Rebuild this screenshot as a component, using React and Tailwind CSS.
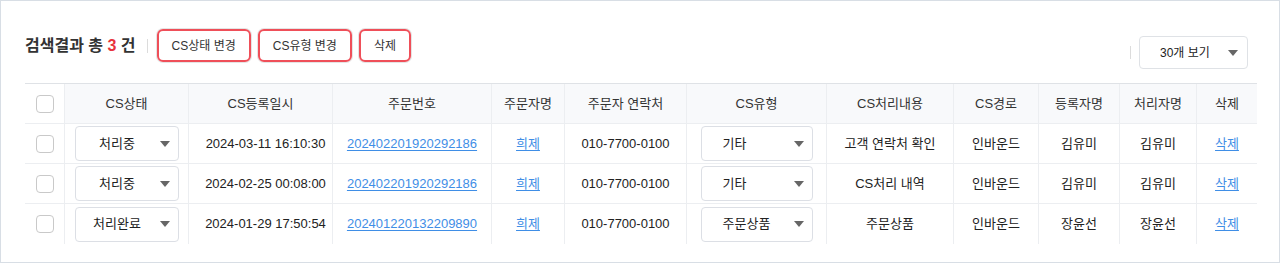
const FONT = { fontFamily: '"Liberation Sans", "Noto Sans CJK KR", sans-serif' };

const cols = 'grid grid-cols-[40px_124px_144px_159px_73px_122px_140px_127px_85px_81px_77px_60px]';

const rows = [
	{ status: '처리중', date: '2024-03-11 16:10:30', order: '202402201920292186', type: '기타', content: '고객 연락처 확인', staff: '김유미' },
	{ status: '처리중', date: '2024-02-25 00:08:00', order: '202402201920292186', type: '기타', content: 'CS처리 내역', staff: '김유미' },
	{ status: '처리완료', date: '2024-01-29 17:50:54', order: '202401220132209890', type: '주문상품', content: '주문상품', staff: '장윤선' },
];

function Caret() {
	return (
		<svg width="10" height="6" viewBox="0 0 10 6" className="shrink-0">
			<path d="M0 0h10L5 6z" fill="#666" />
		</svg>
	);
}

function Checkbox() {
	return <span className="block h-[18px] w-[18px] rounded-[4px] border border-[#c9c9c9] bg-white" />;
}

function Cell({ children, last, className = '' }) {
	return (
		<div className={`flex items-center justify-center ${last ? '' : 'border-r border-[#eceef1]'} ${className}`}>
			{children}
		</div>
	);
}

export default function App() {
	const headers = ['CS상태', 'CS등록일시', '주문번호', '주문자명', '주문자 연락처', 'CS유형', 'CS처리내용', 'CS경로', '등록자명', '처리자명', '삭제'];
	return (
		<div style={FONT} className="h-[263px] w-full border border-[#d8dee5] bg-white px-6 pt-[28px] text-[13px] text-[#222]">
			<div className="flex items-start justify-between">
				<div className="flex items-center">
					<h2 className="text-[16px] font-semibold text-[#333]">
						검색결과 총 <span className="text-[#e8333d]">3</span> 건
					</h2>
					<span className="ml-[11px] mr-[9px] h-[14px] w-px bg-[#dcdcdc]" />
					<div className="flex gap-[7px]">
						{['CS상태 변경', 'CS유형 변경', '삭제'].map((t) => (
							<button
								key={t}
								className="h-[33px] rounded-[6px] border-2 border-[#ef4f59] px-[13px] text-[12px] text-[#333] shadow-[0_0_0_1px_#e4e4e4]"
							>
								{t}
							</button>
						))}
					</div>
				</div>
				<div className="mr-[7px] mt-[7px] flex items-center">
					<span className="mr-[8px] h-[13px] w-px bg-[#dcdcdc]" />
					<div className="flex h-[33px] w-[109px] items-center justify-between rounded-[4px] border border-[#dfe2e6] pl-[20px] pr-[9px] text-[12px] text-[#222]">
						<span>30개 보기</span>
						<Caret />
					</div>
				</div>
			</div>

			<div className="mt-[14px] w-[1232px] border-t border-[#dfe2e6]">
				<div className={`${cols} h-[40px] border-b border-[#eceef1] text-[#333]`}>
					<Cell>
						<Checkbox />
					</Cell>
					{headers.map((h, i) => (
						<Cell key={h} last={i === headers.length - 1} className="bg-[#f8f9fb]">
							{h}
						</Cell>
					))}
				</div>
				{rows.map((r, idx) => (
					<div key={idx} className={`${cols} h-[40px] ${idx < rows.length - 1 ? 'border-b border-[#eceef1]' : ''}`}>
						<Cell>
							<Checkbox />
						</Cell>
						<Cell>
							<div className="flex h-[35px] w-[104px] items-center rounded-[4px] border border-[#dcdfe5] pl-[8px] pr-[8px]">
								<span className="mr-[9px] flex-1 text-center text-[13px]">{r.status}</span>
								<Caret />
							</div>
						</Cell>
						<Cell className="pl-[10px]">{r.date}</Cell>
						<Cell>
							<a href="#" className="text-[#3f8ee6] underline underline-offset-2">
								{r.order}
							</a>
						</Cell>
						<Cell>
							<a href="#" className="text-[#3f8ee6] underline underline-offset-2">
								희제
							</a>
						</Cell>
						<Cell>010-7700-0100</Cell>
						<Cell>
							<div className="flex h-[35px] w-[112px] items-center justify-between rounded-[4px] border border-[#dcdfe5] pl-[21px] pr-[8px]">
								<span className="text-[13px]">{r.type}</span>
								<Caret />
							</div>
						</Cell>
						<Cell>{r.content}</Cell>
						<Cell>인바운드</Cell>
						<Cell>{r.staff}</Cell>
						<Cell>{r.staff}</Cell>
						<Cell last>
							<a href="#" className="text-[#3f8ee6] underline underline-offset-2">
								삭제
							</a>
						</Cell>
					</div>
				))}
			</div>
		</div>
	);
}
